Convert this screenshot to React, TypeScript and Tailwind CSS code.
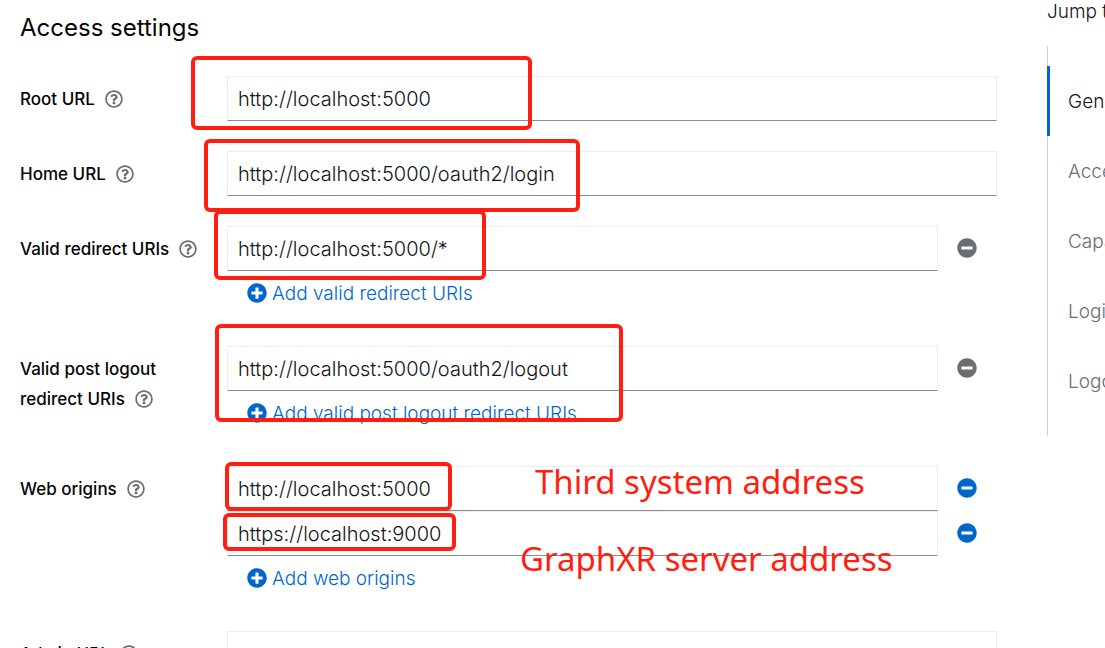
import type { ReactNode } from "react";
import { FaMinusCircle, FaPlusCircle, FaRegQuestionCircle } from "react-icons/fa";

function Marker({ className }: { className: string }) {
  return (
    <span
      aria-hidden="true"
      className={`pointer-events-none absolute z-10 rounded-md border-4 border-[#ff1e10] ${className}`}
    />
  );
}

function Note({ className, children }: { className: string; children: ReactNode }) {
  return (
    <span
      className={`pointer-events-none absolute z-10 whitespace-nowrap font-['Noto_Sans',sans-serif] text-[33px] leading-10 font-normal text-[#ff1e10] ${className}`}
    >
      {children}
    </span>
  );
}

function TextField({ id, value, label }: { id: string; value: string; label?: string }) {
  return (
    <input
      id={id}
      type="text"
      aria-label={label}
      defaultValue={value}
      className="h-[45px] w-full min-w-0 flex-1 border border-[#ededed] border-b-[#8a8d90] bg-white px-[10px] text-[20px] font-light text-[#151515] outline-none"
    />
  );
}

function Row({ id, label, children }: { id: string; label: string; children: ReactNode }) {
  return (
    <div className="flex">
      <div className="w-[207px] shrink-0 pt-2 pr-2 text-[17px] leading-[30px] font-medium text-[#050505]">
        <label htmlFor={id}>{label}</label>
        <button
          type="button"
          aria-label={`Help for ${label}`}
          className="ml-[10px] pb-[2px] align-middle text-[#6a6e73]"
        >
          <FaRegQuestionCircle size={18} className="block" />
        </button>
      </div>
      <div className="min-w-0 flex-1">{children}</div>
    </div>
  );
}

function RemovableField({
  id,
  value,
  label,
  enabled = false,
  children,
}: {
  id: string;
  value: string;
  label?: string;
  enabled?: boolean;
  children?: ReactNode;
}) {
  return (
    <div className="relative flex">
      <TextField id={id} value={value} label={label} />
      <button
        type="button"
        aria-label="Remove"
        className={`flex h-[45px] w-[59px] shrink-0 items-center justify-center pr-[2px] pb-[2px] ${enabled ? "text-[#0066cc]" : "text-[#6a6e73]"}`}
      >
        <FaMinusCircle size={20} />
      </button>
      {children}
    </div>
  );
}

function AddButton({ children }: { children: ReactNode }) {
  return (
    <button type="button" className="flex h-[45px] items-center gap-[5px] pl-5 text-[19px] font-light text-[#0066cc]">
      <FaPlusCircle size={20} className="mb-[2px]" />
      <span className="pt-[2px]">{children}</span>
    </button>
  );
}

const sections = ["General settings", "Access settings", "Capability config", "Login settings", "Logout settings"];

export default function App() {
  return (
    <div className="flex h-screen overflow-hidden bg-white font-['Inter',sans-serif] text-[#151515]">
      <main className="min-w-0 flex-1 pt-2 pr-[50px] pl-5">
        <h2 className="mb-7 text-[24px] leading-10 text-[#050505]">Access settings</h2>
        <form className="flex flex-col gap-[30px]">
          <Row id="root-url" label="Root URL">
            <div className="relative flex">
              <TextField id="root-url" value="http://localhost:5000" />
              <Marker className="-top-5 -left-9 h-[74px] w-[341px]" />
            </div>
          </Row>
          <Row id="home-url" label="Home URL">
            <div className="relative flex">
              <TextField id="home-url" value="http://localhost:5000/oauth2/login" />
              <Marker className="-top-3 -left-[23px] h-[73px] w-[376px]" />
            </div>
          </Row>
          <Row id="redirect-uri" label="Valid redirect URIs">
            <RemovableField id="redirect-uri" value="http://localhost:5000/*">
              <Marker className="-top-4 -left-[13px] h-[70px] w-[272px]" />
            </RemovableField>
            <AddButton>Add valid redirect URIs</AddButton>
          </Row>
          <Row id="logout-uri" label="Valid post logout redirect URIs">
            <RemovableField id="logout-uri" value="http://localhost:5000/oauth2/logout">
              <Marker className="-top-[22px] -left-3 h-[98px] w-[408px]" />
            </RemovableField>
            <AddButton>Add valid post logout redirect URIs</AddButton>
          </Row>
          <Row id="origin-0" label="Web origins">
            <RemovableField id="origin-0" value="http://localhost:5000" enabled>
              <Marker className="-top-1 -left-[2px] h-[49px] w-[227px]" />
              <Note className="-top-1 left-[308px]">Third system address</Note>
            </RemovableField>
            <RemovableField id="origin-1" label="Web origin 2" value="https://localhost:9000" enabled>
              <Marker className="top-[2px] -left-1 h-[38px] w-[233px]" />
              <Note className="top-7 left-[293px]">GraphXR server address</Note>
            </RemovableField>
            <AddButton>Add web origins</AddButton>
          </Row>
          <Row id="admin-url" label="Admin URL">
            <div className="flex">
              <TextField id="admin-url" value="" />
            </div>
          </Row>
        </form>
      </main>
      <nav aria-label="Jump to section" className="w-[58px] shrink-0 overflow-hidden text-[19px] font-light whitespace-nowrap">
        <div className="h-[46px] leading-6">Jump to section</div>
        <ul className="border-l border-[#d2d2d2] py-5">
          {sections.map((name, i) => (
            <li key={name} className="-ml-px">
              <a
                href="#"
                className={`flex h-[70px] items-center border-l-[3px] pt-[2px] pl-[18px] ${
                  i === 0 ? "border-[#0066cc] text-[#151515]" : "border-transparent text-[#6a6e73]"
                }`}
              >
                {name}
              </a>
            </li>
          ))}
        </ul>
      </nav>
    </div>
  );
}
